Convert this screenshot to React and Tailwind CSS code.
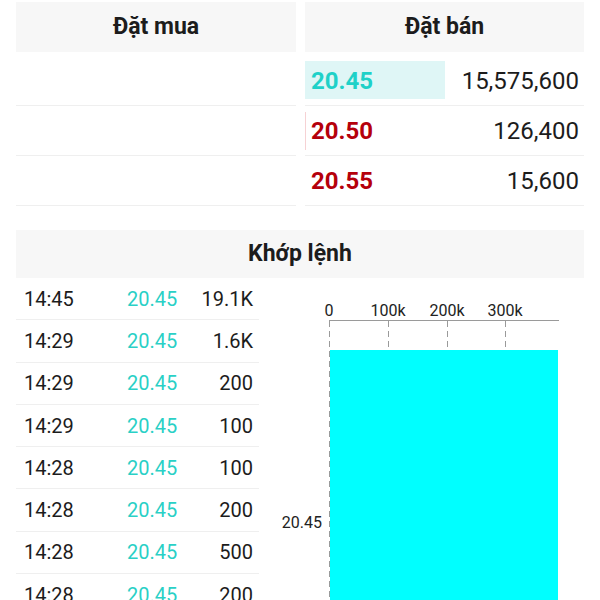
import React from 'react';

const trades = [
  ['14:45', '20.45', '19.1K'],
  ['14:29', '20.45', '1.6K'],
  ['14:29', '20.45', '200'],
  ['14:29', '20.45', '100'],
  ['14:28', '20.45', '100'],
  ['14:28', '20.45', '200'],
  ['14:28', '20.45', '500'],
  ['14:28', '20.45', '200'],
  ['14:28', '20.45', '100'],
];

const asks = [
  { price: '20.45', vol: '15,575,600', color: 'text-[#1fd1c8]', bar: 'w-[140px] bg-[#dff6f6]' },
  { price: '20.50', vol: '126,400', color: 'text-[#b5000b]', bar: 'w-px bg-[#f6d2d4]' },
  { price: '20.55', vol: '15,600', color: 'text-[#b5000b]', bar: 'w-0' },
];

function DepthChart() {
  const ticks = [
    { x: 70, label: '0' },
    { x: 129, label: '100k' },
    { x: 188, label: '200k' },
    { x: 246, label: '300k' },
  ];
  return (
    <svg width="341" height="420" className="block" fontFamily="Roboto, sans-serif">
      {ticks.map((t) => (
        <text key={t.label} x={t.x} y="38" fontSize="16" textAnchor="middle" fill="#222">
          {t.label}
        </text>
      ))}
      <line x1="70" y1="42.5" x2="300" y2="42.5" stroke="#9a9a9a" strokeWidth="1" />
      <rect x="71" y="72" width="228" height="344" fill="#00ffff" />
      {ticks.map((t) => (
        <line
          key={'g' + t.label}
          x1={t.x + 0.5}
          y1="43"
          x2={t.x + 0.5}
          y2={t.x === 70 ? 416 : 70}
          stroke="#9a9a9a"
          strokeWidth="1"
          strokeDasharray="6 4"
        />
      ))}
      <text x="63" y="250" fontSize="16" textAnchor="end" fill="#222">
        20.45
      </text>
    </svg>
  );
}

export default function App() {
  return (
    <div className="w-[600px] h-[600px] overflow-hidden bg-white text-[#1c1c1c] font-['Roboto',sans-serif]">
      {/* Order book */}
      <div className="flex gap-[9px] px-4 pt-[2px]">
        <div className="w-[280px]">
          <div className="h-[50px] bg-[#f7f7f7] flex items-center justify-center text-[23px] font-bold">Đặt mua</div>
          <div className="h-[54px] border-b border-[#efefef]" />
          <div className="h-[50px] border-b border-[#efefef]" />
          <div className="h-[50px] border-b border-[#efefef]" />
        </div>
        <div className="w-[279px]">
          <div className="h-[50px] bg-[#f7f7f7] flex items-center justify-center text-[23px] font-bold">Đặt bán</div>
          {asks.map((a, i) => (
            <div
              key={a.price}
              className={
                'relative flex items-center border-b border-[#efefef] ' + (i === 0 ? 'h-[54px] pt-[4px]' : 'h-[50px]')
              }
            >
              <div className={'absolute left-0 h-[38px] ' + a.bar + (i === 0 ? ' top-[9px]' : ' top-[6px]')} />
              <span className={'relative pl-[6px] text-[24px] font-bold ' + a.color}>{a.price}</span>
              <span className="relative ml-auto pr-[5px] text-[24px]">{a.vol}</span>
            </div>
          ))}
        </div>
      </div>

      {/* Matched orders */}
      <div className="mt-6 px-4">
        <div className="h-[48px] bg-[#f7f7f7] flex items-center justify-center text-[23px] font-bold">Khớp lệnh</div>
      </div>
      <div className="flex pl-4">
        <div className="w-[243px]">
          {trades.map((t, i) => (
            <div key={i} className="h-[42.3px] flex items-center border-b border-[#efefef] text-[20px]">
              <span className="w-[111px] pl-2">{t[0]}</span>
              <span className="text-[#2ad0c6]">{t[1]}</span>
              <span className="ml-auto pr-[6px]">{t[2]}</span>
            </div>
          ))}
        </div>
        <DepthChart />
      </div>
    </div>
  );
}
